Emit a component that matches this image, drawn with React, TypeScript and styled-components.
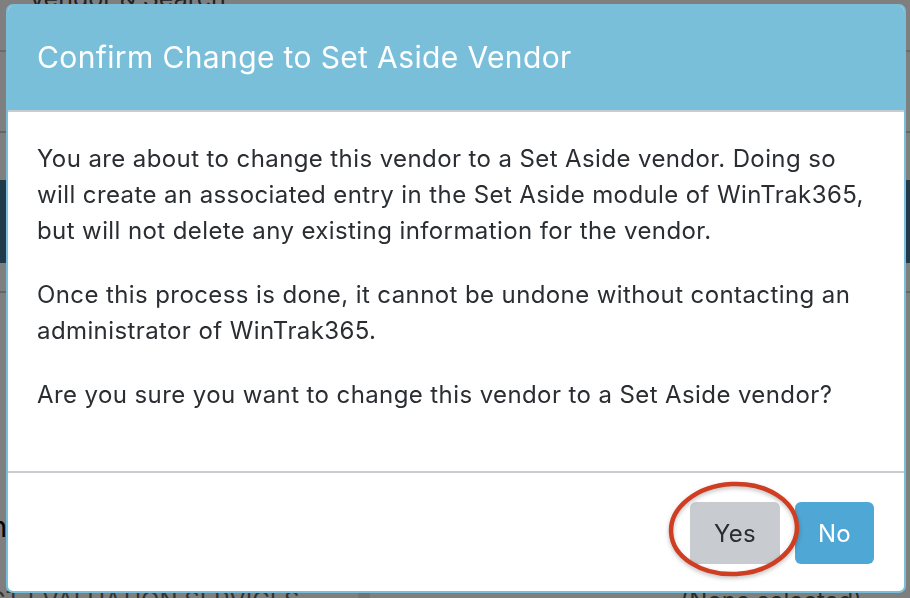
import styled, {createGlobalStyle} from 'styled-components';

const GlobalStyle = createGlobalStyle`
  html, body {
    margin: 0;
    padding: 0;
    background: #ffffff;
    font-family: Inter, "Open Sans", "Liberation Sans", sans-serif;
  }
`;

const App = () => {
  return (
    <>
      <GlobalStyle />
      <Page>
        <PageTop>vendor &amp; Search</PageTop>
        <PageRow />
        <NavBar>
          <NavDots>⋮</NavDots>
        </NavBar>
        <PageSection />
        <PageLabelRow>
          <PageLabel>Certification</PageLabel>
        </PageLabelRow>
        <PageBottom>
          <BottomText>CT EVALUATION SERVICES</BottomText>
          <BottomInput />
          <BottomSelect>(None selected)</BottomSelect>
        </PageBottom>
      </Page>
      <Backdrop />
      <Modal>
        <Header>
          <Title>Confirm Change to Set Aside Vendor</Title>
        </Header>
        <Body>
          <Para>
            You are about to change this vendor to a Set Aside vendor. Doing so
            will create an associated entry in the Set Aside module of
            WinTrak365, but will not delete any existing information for the
            vendor.
          </Para>
          <Para>
            Once this process is done, it cannot be undone without contacting an
            administrator of WinTrak365.
          </Para>
          <Para>
            Are you sure you want to change this vendor to a Set Aside vendor?
          </Para>
        </Body>
        <Footer>
          <Circled>
            <Button variant="secondary">Yes</Button>
            <Ring viewBox="0 0 132 97" width={132} height={97}>
              <ellipse
                cx="66"
                cy="49"
                rx="63"
                ry="45"
                fill="none"
                stroke="#cf3d22"
                strokeWidth="4.5"
                transform="rotate(-3 66 49)"
              />
            </Ring>
          </Circled>
          <Button variant="primary">No</Button>
        </Footer>
      </Modal>
    </>
  );
};

const Page = styled.div`
  width: 910px;
  height: 598px;
  overflow: hidden;
  background: #fff;
  display: flex;
  flex-direction: column;
`;

const PageTop = styled.div`
  height: 74px;
  box-sizing: border-box;
  padding-left: 30px;
  margin-top: -22px;
  font-size: 25px;
  line-height: 40px;
  color: #444;
  border-bottom: 2px solid #d8d8d8;
  flex: none;
`;

const PageRow = styled.div`
  height: 81px;
  box-sizing: border-box;
  border-bottom: 2px solid #c8c8c8;
  flex: none;
`;

const NavBar = styled.div`
  margin-top: 47px;
  height: 83px;
  background: #3f7590;
  display: flex;
  align-items: center;
  flex: none;
`;

const NavDots = styled.span`
  color: #aac;
  font-size: 20px;
  padding-left: 2px;
`;

const PageSection = styled.div`
  height: 30px;
  box-sizing: border-box;
  border-bottom: 2px solid #c8c8c8;
  flex: none;
`;

const PageLabelRow = styled.div`
  height: 267px;
  display: flex;
  align-items: flex-end;
  padding-bottom: 16px;
  box-sizing: border-box;
  flex: none;
`;

const PageLabel = styled.span`
  font-size: 28px;
  line-height: 34px;
  color: #000;
  margin-left: -155px;
`;

const PageBottom = styled.div`
  display: flex;
  align-items: flex-start;
  padding: 26px 48px 0 0;
  flex: none;
`;

const BottomText = styled.span`
  font-size: 24px;
  color: #666;
  margin-left: -12px;
`;

const BottomInput = styled.span`
  margin-left: 58px;
  margin-right: auto;
  width: 12px;
  height: 20px;
  background: #e8e8e8;
`;

const BottomSelect = styled.span`
  font-size: 24px;
  color: #555;
`;

const Backdrop = styled.div`
  position: fixed;
  inset: 0;
  background: rgba(0, 0, 0, 0.5);
`;

const Modal = styled.div`
  position: fixed;
  top: 4px;
  left: 6px;
  width: 900px;
  box-sizing: border-box;
  border: 2px solid #79bfda;
  border-radius: 7px;
  background: #fff;
  overflow: hidden;
`;

const Header = styled.div`
  height: 106px;
  box-sizing: border-box;
  background: #79bfda;
  border-bottom: 2px solid #c6cdd2;
  display: flex;
  align-items: center;
  padding: 0 29px;
`;

const Title = styled.h5`
  margin: 0 0 2px;
  font-size: 30px;
  line-height: 36px;
  font-weight: 400;
  color: #fff;
  letter-spacing: 0.37px;
`;

const Body = styled.div`
  padding: 29px 29px 30px;
`;

const Para = styled.p`
  margin: 0 0 28px;
  font-size: 24px;
  line-height: 36px;
  letter-spacing: 0.4px;
  color: #2a2d31;
`;

const Footer = styled.div`
  border-top: 2px solid #c9cdd1;
  display: flex;
  justify-content: flex-end;
  align-items: center;
  gap: 15px;
  padding: 29px 30px 27px;
`;

const Circled = styled.div`
  position: relative;
  display: flex;
`;

const Ring = styled.svg`
  position: absolute;
  left: -22px;
  top: -22px;
  pointer-events: none;
  filter: drop-shadow(0 2px 2px rgba(0, 0, 0, 0.25));
`;

const Button = styled.button<{variant: 'primary' | 'secondary'}>`
  height: 62px;
  padding: 0 20px;
  border: none;
  border-radius: 6px;
  font-family: inherit;
  font-size: 24px;
  letter-spacing: 0.3px;
  background: ${({variant}) => (variant === 'primary' ? '#4fa7d5' : '#c8ccd0')};
  color: ${({variant}) => (variant === 'primary' ? '#ffffff' : '#2a2d31')};
  min-width: ${({variant}) => (variant === 'primary' ? '79px' : '90px')};
`;

export default App;
